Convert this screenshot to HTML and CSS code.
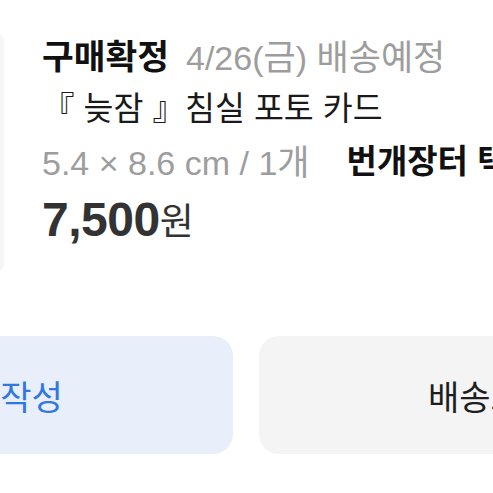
FILE: index.html
```html
<!DOCTYPE html>
<html lang="ko">
<head>
<meta charset="utf-8">
<link rel="stylesheet" href="styles.css">
</head>
<body>
<div class="page">
  <div class="order">
    <div class="thumb"></div>
    <div class="info">
      <div class="line title"><span class="status">구매확정</span><span class="date">4/26(<span class="ko">금</span>) <span class="ko">배송예정</span></span></div>
      <div class="line name">『 늦잠 』침실 포토 카드</div>
      <div class="line spec"><span class="size">5.4 × 8.6 cm / 1<span class="ko">개</span></span><span class="brand">번개장터 택배</span></div>
      <div class="line price"><span class="num">7,500</span><span class="won">원</span></div>
    </div>
  </div>
  <div class="actions">
    <div class="btn review">후기 작성</div>
    <div class="btn ship">배송조회</div>
  </div>
</div>
</body>
</html>
```

FILE: styles.css
```css
html, body {
  margin: 0;
  padding: 0;
  background: #ffffff;
  overflow: hidden;
}
body {
  width: 493px;
  height: 493px;
  font-family: "Liberation Sans", "Noto Sans CJK KR", sans-serif;
  color: #111;
}
.page {
  display: flex;
  flex-direction: column;
}
.order {
  display: flex;
  align-items: flex-start;
  padding-top: 33px;
  height: 303px;
  box-sizing: border-box;
}
.thumb {
  flex-shrink: 0;
  width: 200px;
  height: 239px;
  margin-left: -196px;
  background: #f6f6f6;
  border-radius: 8px;
}
.info {
  margin-left: 38px;
  margin-top: -4px;
  display: flex;
  flex-direction: column;
  white-space: nowrap;
}
.line {
  display: flex;
  align-items: center;
}
.ko {
  font-family: "Noto Sans CJK KR", sans-serif;
  font-size: 1.03em;
}
.title {
  height: 50px;
  font-size: 34px;
}
.status {
  font-family: "Noto Sans CJK KR", sans-serif;
  font-weight: 700;
  font-size: 34.5px;
  color: #111;
}
.date {
  margin-left: 17px;
  color: #9d9d9d;
}
.name {
  height: 52px;
  font-family: "Noto Sans CJK KR", sans-serif;
  font-size: 32.5px;
  color: #1a1a1a;
}
.spec {
  height: 56px;
  font-size: 34px;
}
.size {
  color: #9d9d9d;
}
.brand {
  margin-left: 37px;
  font-family: "Noto Sans CJK KR", sans-serif;
  font-weight: 700;
  font-size: 33px;
  color: #111;
}
.price {
  height: 64px;
  color: #333;
}
.num {
  font-weight: 700;
  font-size: 48px;
  letter-spacing: -0.5px;
}
.won {
  font-family: "Noto Sans CJK KR", sans-serif;
  font-size: 37px;
  font-weight: 400;
}
.actions {
  display: flex;
  gap: 26px;
  margin-left: -242px;
  margin-top: 33px;
}
.btn {
  flex-shrink: 0;
  height: 118px;
  border-radius: 20px;
  display: flex;
  align-items: center;
  justify-content: center;
  font-family: "Noto Sans CJK KR", sans-serif;
  font-size: 34px;
  font-weight: 400;
  white-space: nowrap;
}
.review {
  width: 475px;
  background: #e8effb;
  color: #3077e3;
}
.ship {
  width: 463px;
  background: #f4f4f5;
  color: #1e1e1e;
}
```
